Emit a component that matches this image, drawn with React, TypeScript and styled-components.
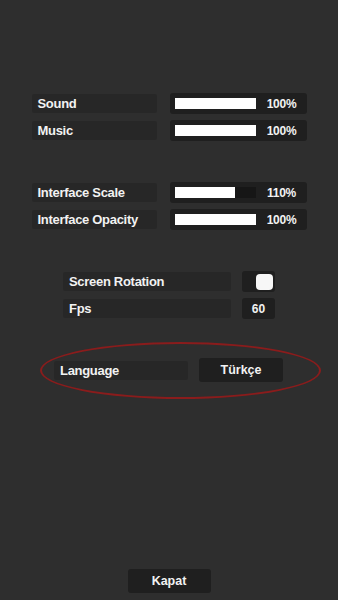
import React from 'react';
import styled, { createGlobalStyle } from 'styled-components';

const GlobalStyle = createGlobalStyle`
  html, body {
    margin: 0;
    padding: 0;
    background: #2e2e2e;
  }
  body {
    font-family: "Liberation Sans", Arial, sans-serif;
    color: #f2f2f2;
  }
`;

const Page = styled.div`
  height: 600px;
  display: flex;
  flex-direction: column;
  align-items: center;
  padding: 93px 0 7px;
  box-sizing: border-box;
`;

const Section = styled.div<{ top?: number }>`
  display: flex;
  flex-direction: column;
  gap: 6px;
  margin-top: ${props => props.top || 0}px;
`;

const Row = styled.div<{ gap: number }>`
  display: flex;
  align-items: center;
  height: 21px;
  gap: ${props => props.gap}px;
`;

const Label = styled.div<{ width: number }>`
  width: ${props => props.width}px;
  height: 19px;
  box-sizing: border-box;
  padding-left: 6px;
  background: #272727;
  border-radius: 2px;
  display: flex;
  align-items: center;
  font-size: 13px;
  letter-spacing: -0.3px;
  font-weight: bold;
`;

const SliderBox = styled.div`
  width: 137px;
  height: 21px;
  box-sizing: border-box;
  padding-left: 5px;
  background: #1f1f1f;
  border-radius: 3px;
  display: flex;
  align-items: center;
`;

const Track = styled.div`
  width: 81px;
  height: 11px;
  background: #161616;
  display: flex;
`;

const Fill = styled.div`
  height: 100%;
  background: #ffffff;
`;

const SliderValue = styled.span`
  flex: 1;
  text-align: center;
  font-size: 12px;
  letter-spacing: -0.3px;
  font-weight: bold;
  padding-left: 1px;
`;

const SmallBox = styled.div`
  width: 33px;
  height: 21px;
  box-sizing: border-box;
  background: #1f1f1f;
  border-radius: 3px;
  display: flex;
  align-items: center;
  justify-content: center;
  font-size: 12px;
  font-weight: bold;
`;

const ToggleBox = styled(SmallBox)`
  justify-content: flex-end;
  padding-right: 2px;
`;

const Knob = styled.div`
  width: 17px;
  height: 16px;
  border-radius: 4px;
  background: #f7f7f7;
`;

const LanguageRow = styled.div`
  position: relative;
  display: flex;
  align-items: center;
  gap: 11px;
  height: 24px;
  margin-top: 39px;
  margin-left: -1px;

  &::after {
    content: '';
    position: absolute;
    left: -14px;
    top: -16px;
    width: 281px;
    height: 57px;
    box-sizing: border-box;
    border: 2px solid #8a1c1c;
    border-radius: 50%;
    pointer-events: none;
  }
`;

const Button = styled.div<{ width: number }>`
  width: ${props => props.width}px;
  height: 24px;
  background: #1f1f1f;
  border-radius: 3px;
  display: flex;
  align-items: center;
  justify-content: center;
  font-size: 12.5px;
  font-weight: bold;
`;

const Footer = styled.div`
  margin-top: auto;
`;

interface SliderRowProps {
  label: string;
  value: number;
  fill: number;
}

const SliderRow: React.FC<SliderRowProps> = ({ label, value, fill }) => (
  <Row gap={13}>
    <Label width={125}>{label}</Label>
    <SliderBox>
      <Track>
        <Fill style={{ width: `${fill}%` }} />
      </Track>
      <SliderValue>{value}%</SliderValue>
    </SliderBox>
  </Row>
);

const App: React.FC = () => {
  return (
    <>
      <GlobalStyle />
      <Page>
        <Section>
          <SliderRow label="Sound" value={100} fill={100} />
          <SliderRow label="Music" value={100} fill={100} />
        </Section>

        <Section top={41}>
          <SliderRow label="Interface Scale" value={110} fill={75} />
          <SliderRow label="Interface Opacity" value={100} fill={100} />
        </Section>

        <Section top={41}>
          <Row gap={11}>
            <Label width={168}>Screen Rotation</Label>
            <ToggleBox>
              <Knob />
            </ToggleBox>
          </Row>
          <Row gap={11}>
            <Label width={168}>Fps</Label>
            <SmallBox>60</SmallBox>
          </Row>
        </Section>

        <LanguageRow>
          <Label width={134}>Language</Label>
          <Button width={84}>Türkçe</Button>
        </LanguageRow>

        <Footer>
          <Button width={83}>Kapat</Button>
        </Footer>
      </Page>
    </>
  );
};

export default App;
